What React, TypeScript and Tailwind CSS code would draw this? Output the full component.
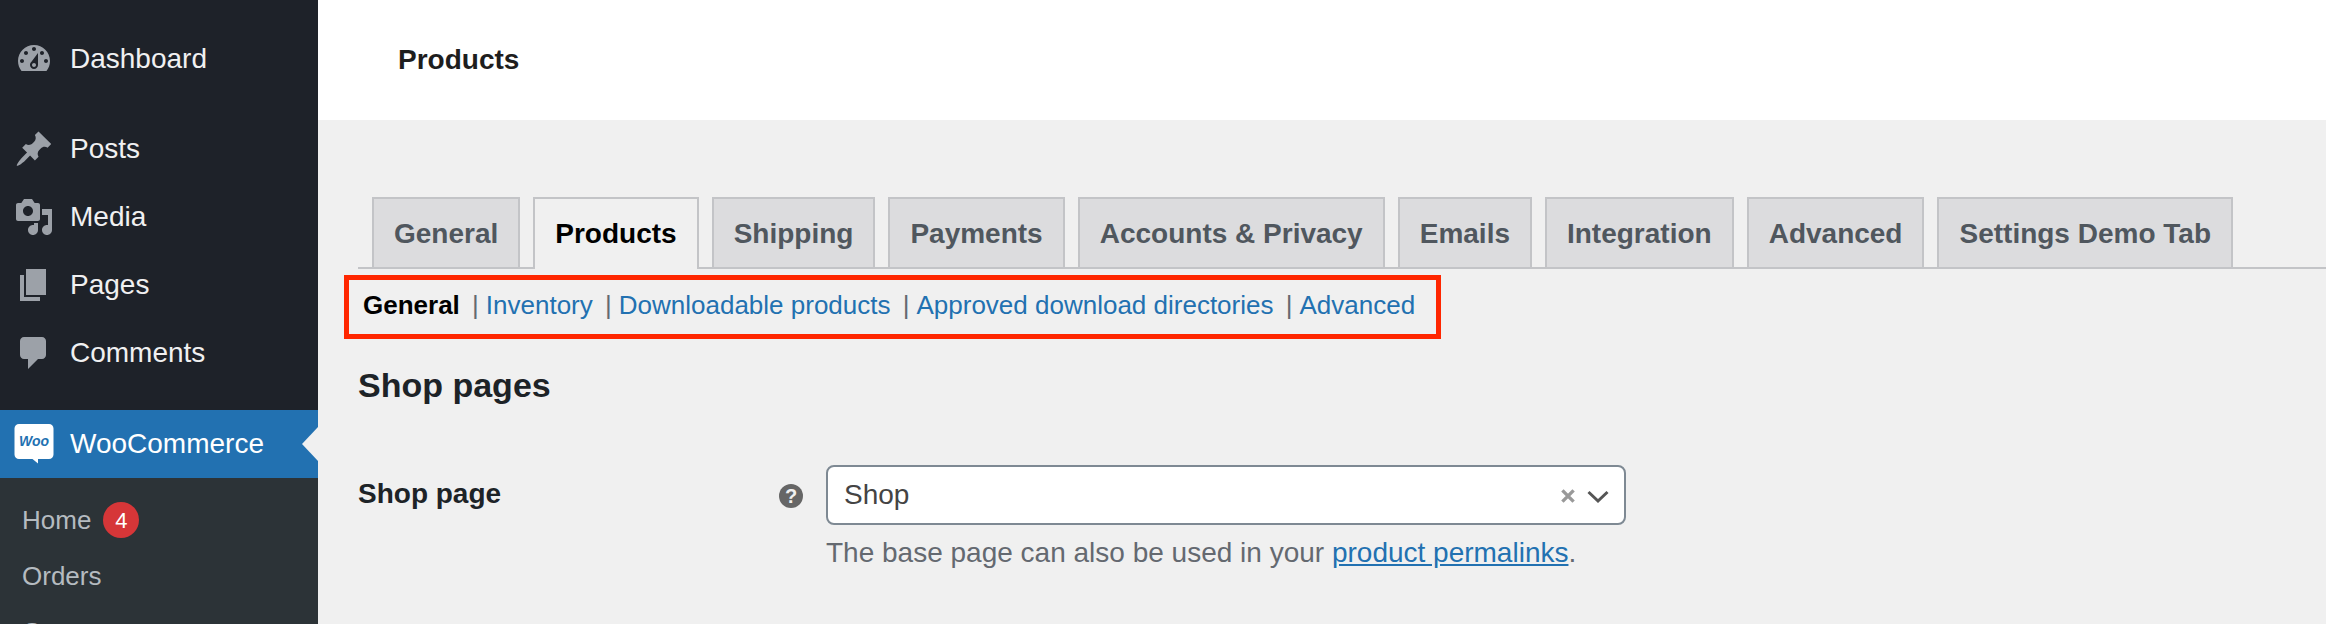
import { useState } from "react";

interface MenuItem {
  label: string;
  path: string;
}

const dashboardItem: MenuItem = {
  label: "Dashboard",
  path: "M3.76 16h12.48c1.1-1.37 1.76-3.11 1.76-5 0-4.42-3.58-8-8-8s-8 3.58-8 8c0 1.89.66 3.63 1.76 5zM10 4c.55 0 1 .45 1 1s-.45 1-1 1-1-.45-1-1 .45-1 1-1zM6 6c.55 0 1 .45 1 1s-.45 1-1 1-1-.45-1-1 .45-1 1-1zm8 0c.55 0 1 .45 1 1s-.45 1-1 1-1-.45-1-1 .45-1 1-1zm-5.37 5.55L12 7v6c0 1.1-.9 2-2 2s-2-.9-2-2c0-.57.24-1.08.63-1.45zM4 10c.55 0 1 .45 1 1s-.45 1-1 1-1-.45-1-1 .45-1 1-1zm12 0c.55 0 1 .45 1 1s-.45 1-1 1-1-.45-1-1 .45-1 1-1zm-5 3c0-.55-.45-1-1-1s-1 .45-1 1 .45 1 1 1 1-.45 1-1z",
};

const contentItems: MenuItem[] = [
  {
    label: "Posts",
    path: "M10.44 3.02l1.82-1.82 6.36 6.35-1.83 1.82c-1.05-.68-2.48-.57-3.41.36l-.75.75c-.92.93-1.04 2.35-.35 3.41l-1.83 1.82-2.41-2.41-2.8 2.79c-.42.42-3.38 2.71-3.8 2.29s1.86-3.39 2.28-3.81l2.79-2.79L4.1 9.36l1.83-1.82c1.05.69 2.48.57 3.4-.36l.75-.75c.93-.92 1.05-2.35.36-3.41z",
  },
  {
    label: "Media",
    path: "M13 11V4c0-.55-.45-1-1-1h-1.67L9 1H5L3.67 3H2c-.55 0-1 .45-1 1v7c0 .55.45 1 1 1h10c.55 0 1-.45 1-1zM7 4.5c1.38 0 2.5 1.12 2.5 2.5S8.38 9.5 7 9.5 4.5 8.38 4.5 7 5.62 4.5 7 4.5zM14 6h5v10.5c0 1.38-1.12 2.5-2.5 2.5S14 17.88 14 16.5s1.12-2.5 2.5-2.5c.17 0 .34.02.5.05V9h-3V6zm-4 8.05V13h2v3.5c0 1.38-1.12 2.5-2.5 2.5S7 17.88 7 16.5 8.12 14 9.5 14c.17 0 .34.02.5.05z",
  },
  {
    label: "Pages",
    path: "M6 15V2h10v13H6zm-1 1h8v2H3V5h2v11z",
  },
  {
    label: "Comments",
    path: "M5 2h9c1.1 0 2 .9 2 2v7c0 1.1-.9 2-2 2h-2l-5 5v-5H5c-1.1 0-2-.9-2-2V4c0-1.1.9-2 2-2z",
  },
];

const tabs = [
  "General",
  "Products",
  "Shipping",
  "Payments",
  "Accounts & Privacy",
  "Emails",
  "Integration",
  "Advanced",
  "Settings Demo Tab",
];

const sections = [
  "General",
  "Inventory",
  "Downloadable products",
  "Approved download directories",
  "Advanced",
];

function MenuLink({ item }: { item: MenuItem }) {
  return (
    <a href="#" className="flex h-[68px] items-center gap-4 pl-[14px] text-[28px] leading-9 text-[#f0f0f1]">
      <svg viewBox="0 0 20 20" className="h-10 w-10 shrink-0 fill-[#9ca1a8]" aria-hidden="true">
        <path fillRule="evenodd" d={item.path} />
      </svg>
      {item.label}
    </a>
  );
}

function WooIcon() {
  return (
    <svg viewBox="0 0 40 40" className="h-10 w-10 shrink-0" aria-hidden="true">
      <path
        fill="#fff"
        d="M5 0h30a4.5 4.5 0 0 1 4.5 4.5v26a4.5 4.5 0 0 1-4.5 4.5H24v4.5L18.5 35H5A4.5 4.5 0 0 1 .5 30.5v-26A4.5 4.5 0 0 1 5 0z"
      />
      <text
        x="20"
        y="22"
        textAnchor="middle"
        fill="#2271b1"
        fontFamily="Liberation Sans, sans-serif"
        fontSize="14"
        fontStyle="italic"
        fontWeight="bold"
      >
        Woo
      </text>
    </svg>
  );
}

function Sidebar() {
  return (
    <nav className="w-[318px] shrink-0 bg-[#1e2229] pt-[25px]">
      <MenuLink item={dashboardItem} />
      <div className="mt-[22px] mb-[23px]">
        {contentItems.map((item) => (
          <MenuLink key={item.label} item={item} />
        ))}
      </div>

      <a
        href="#"
        className="relative flex h-[68px] items-center gap-4 bg-[#2271b1] pl-[14px] text-[28px] leading-9 text-white"
      >
        <WooIcon />
        WooCommerce
        <svg viewBox="0 0 16 34" className="absolute top-[17px] right-0 h-[34px] w-4 fill-[#f0f0f0]" aria-hidden="true">
          <path d="M16 0v34L0 17z" />
        </svg>
      </a>

      <div className="bg-[#2c3337] pt-[14px] text-[26px] text-[#b5bbc0]">
        <a href="#" className="flex h-14 items-center gap-3 pl-[22px]">
          Home
          <span className="flex h-9 w-9 items-center justify-center rounded-full bg-[#d63638] text-[22px] text-white">
            4
          </span>
        </a>
        <a href="#" className="flex h-14 items-center pl-[22px]">
          Orders
        </a>
        <a href="#" className="flex h-14 items-center pl-[22px]">
          Customers
        </a>
      </div>
    </nav>
  );
}

export default function App() {
  const [tab, setTab] = useState<string>("Products");
  const [section, setSection] = useState<string>("General");
  const [shopPage, setShopPage] = useState<string>("Shop");

  return (
    <div className="flex h-screen overflow-hidden bg-[#f0f0f0] font-['Liberation_Sans',Arial,sans-serif]">
      <Sidebar />

      <main className="min-w-0 flex-1">
        <header className="flex h-[120px] items-center bg-white pl-20">
          <h1 className="text-[28px] font-bold text-[#1e1e1e]">Products</h1>
        </header>

        <div className="pt-[77px] pl-10">
          <nav className="flex gap-[13px] border-b-2 border-[#c3c4c7] pl-[14px]">
            {tabs.map((name) => (
              <a
                key={name}
                href="#"
                onClick={() => setTab(name)}
                className={
                  name === tab
                    ? "-mb-[2px] border-2 border-b-0 border-[#c3c4c7] bg-[#f0f0f0] px-5 pt-[17px] pb-[17px] text-[28px] leading-9 font-bold whitespace-nowrap text-black"
                    : "border-2 border-b-0 border-[#c3c4c7] bg-[#dcdcde] px-5 pt-[17px] pb-[15px] text-[28px] leading-9 font-bold whitespace-nowrap text-[#50575e]"
                }
              >
                {name}
              </a>
            ))}
          </nav>

          <ul className="mt-[6px] -ml-[14px] inline-flex gap-[2px] border-5 border-[#ff2600] pt-2 pr-4 pb-3 pl-[9px] align-top text-[26px] leading-[34px] text-[#646970]">
            {sections.map((name, i) => (
              <li key={name} className="whitespace-nowrap">
                <a
                  href="#"
                  onClick={() => setSection(name)}
                  className={name === section ? "px-[5px] font-bold text-black" : "px-[5px] text-[#2271b1]"}
                >
                  {name}
                </a>
                {i < sections.length - 1 && " |"}
              </li>
            ))}
          </ul>

          <h2 className="mt-[26px] text-[34px] leading-10 font-bold text-[#1d2327]">Shop pages</h2>

          <div className="mt-[60px] flex items-start">
            <div className="flex w-[468px] shrink-0 items-start justify-between pr-[23px]">
              <label htmlFor="shop-page" className="pt-[11px] text-[28px] leading-9 font-bold text-[#1d2327]">
                Shop page
              </label>
              <span className="mt-[19px] flex h-6 w-6 items-center justify-center rounded-full bg-[#666] text-xl font-bold text-[#f0f0f0]">
                ?
              </span>
            </div>

            <div className="min-w-0 flex-1">
              <div className="relative w-full max-w-[800px]">
                <select
                  id="shop-page"
                  value={shopPage}
                  onChange={(e: React.ChangeEvent<HTMLSelectElement>) => setShopPage(e.target.value)}
                  className="block h-[60px] w-full appearance-none rounded-lg border-2 border-[#7e8993] bg-white px-4 text-[28px] text-[#444]"
                >
                  <option value=""></option>
                  <option value="Shop">Shop</option>
                </select>
                <button
                  type="button"
                  aria-label="Clear"
                  onClick={() => setShopPage("")}
                  className="absolute top-6 right-[51px] h-[14px] w-[14px]"
                >
                  <svg viewBox="0 0 14 14" className="h-[14px] w-[14px]" fill="none" stroke="#999" strokeWidth="3.4">
                    <path d="M1.4 1.4l11.2 11.2M12.6 1.4L1.4 12.6" />
                  </svg>
                </button>
                <svg
                  viewBox="0 0 22 14"
                  className="pointer-events-none absolute top-[25px] right-[17px] h-[14px] w-[22px]"
                  fill="none"
                  stroke="#555"
                  strokeWidth="3"
                  aria-hidden="true"
                >
                  <path d="M1.5 2l9.5 9 9.5-9" />
                </svg>
              </div>
              <p className="mt-[10px] text-[28px] leading-9 text-[#646970]">
                The base page can also be used in your{" "}
                <a href="#" className="text-[#2271b1] underline">
                  product permalinks
                </a>
                .
              </p>
            </div>
          </div>
        </div>
      </main>
    </div>
  );
}
